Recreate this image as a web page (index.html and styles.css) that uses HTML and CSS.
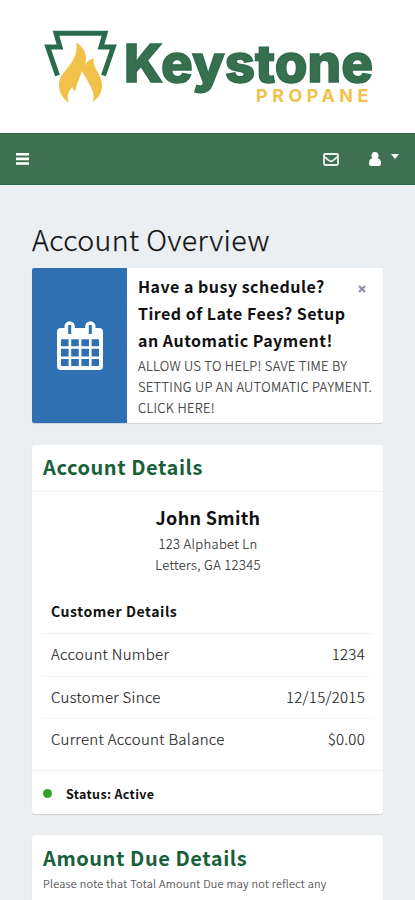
FILE: index.html
```html
<!DOCTYPE html>
<html lang="en">
<head>
<meta charset="utf-8">
<meta name="viewport" content="width=device-width, initial-scale=1">
<title>Account Overview</title>
<link rel="stylesheet" href="styles.css">
</head>
<body>
<header class="brand">
  <svg class="logo" viewBox="0 0 415 133" role="img" aria-label="Keystone Propane">
    <path class="keystone" d="M57.5 75.5 L47.7 47 H60 L56 33.200 H105 L101 47 H113.3 L103.5 75.5"/>
    <path class="flame" d="M76.3 42.5 C87 49 87.500 59 84.500 66 C86.500 61 90 59.500 94 58.300 C91 67 102 73 102 86 C102 93 98.500 98 92.500 102 C96.500 93 89 84 82 71 C80 77 77 82 75.500 91 C73.500 90 72.500 88.500 72.500 86.500 C70 90 65.500 94 69 103 C63 98.500 59 93 59 85 C59 70 79 65 76.300 42.500Z"/>
    <text class="word" x="124" y="82" textLength="249" lengthAdjust="spacingAndGlyphs">Keystone</text>
    <text class="sub" x="256" y="101.500" textLength="117" lengthAdjust="spacingAndGlyphs">PROPANE</text>
  </svg>
</header>
<nav class="bar">
  <svg class="menu" viewBox="0 0 13 12"><path d="M0 0h13v2.600H0zM0 4.600h13v2.600H0zM0 9.200h13v2.600H0z"/></svg>
  <svg class="mail" viewBox="0 0 16 13"><rect x="1" y="1" width="14" height="11" rx="1.200"/><path d="M1.200 3.500 C4 6 6.500 8.300 8 8.300 S12 6 14.800 3.500"/></svg>
  <svg class="user" viewBox="0 0 12 14"><path d="M6 0a3.400 3.600 0 0 1 2.500 6.200C11 6.300 12 8.500 12 11.500 12 13 11.200 14 10 14H2C.8 14 0 13 0 11.500 0 8.500 1 6.300 3.500 6.200A3.400 3.600 0 0 1 6 0z"/></svg>
  <svg class="caret" viewBox="0 0 8 5"><path d="M0 0h8L4 5z"/></svg>
</nav>
<main class="page">
  <h1>Account Overview</h1>
  <section class="promo">
    <div class="promo-icon">
      <svg viewBox="0 0 46 49"><path fill-rule="evenodd" d="M4 7h3.500V5.500a5.200 5.200 0 0 1 10.400 0V7h10.200V5.500a5.200 5.200 0 0 1 10.400 0V7H42a4 4 0 0 1 4 4v34a4 4 0 0 1-4 4H4a4 4 0 0 1-4-4V11a4 4 0 0 1 4-4zM11.200 4v9h3V4zM31.800 4v9h3V4zM4 18.200v7h7.600v-7zM14.200 18.200v7h7.600v-7zM24.400 18.200v7H32v-7zM34.600 18.200v7h7.400v-7zM4 27.800v7.600h7.600v-7.600zM14.200 27.800v7.600h7.600v-7.600zM24.400 27.800v7.600H32v-7.600zM34.600 27.800v7.600h7.400v-7.600zM4 38v7h7.600v-7zM14.200 38v7h7.600v-7zM24.400 38v7H32v-7zM34.600 38v7h7.400v-7z"/></svg>
    </div>
    <div class="promo-body">
      <h2>Have a busy schedule?<br>Tired of Late Fees? Setup<br>an Automatic Payment!</h2>
      <p>ALLOW US TO HELP! SAVE TIME BY<br>SETTING UP AN AUTOMATIC PAYMENT.<br>CLICK HERE!</p>
      <svg class="close" viewBox="0 0 8 8"><path d="M1 1l6 6M7 1L1 7"/></svg>
    </div>
  </section>
  <section class="card account">
    <h3 class="card-title ruled">Account Details</h3>
    <div class="person">
      <h4>John Smith</h4>
      <p>123 Alphabet Ln<br>Letters, GA 12345</p>
    </div>
    <div class="details">
      <h5>Customer Details</h5>
      <div class="row"><span>Account Number</span><span>1234</span></div>
      <div class="row"><span>Customer Since</span><span>12/15/2015</span></div>
      <div class="row"><span>Current Account Balance</span><span>$0.00</span></div>
    </div>
    <div class="status"><i class="dot"></i><span>Status: Active</span></div>
  </section>
  <section class="card due">
    <h3 class="card-title">Amount Due Details</h3>
    <p>Please note that Total Amount Due may not reflect any<br>new offers or common gallon usage.</p>
  </section>
</main>
</body>
</html>
```
FILE: styles.css
```css
* { box-sizing: border-box; margin: 0; padding: 0; }
html, body { height: 900px; overflow: hidden; }
body { background: #ebeff2; color: #111; font-family: "Noto Sans CJK SC", "Noto Sans", sans-serif; display: flex; flex-direction: column; }
svg { display: block; flex: none; }
.brand { height: 133px; flex: none; background: #fff; }
.logo { width: 415px; height: 133px; }
.keystone { fill: none; stroke: #2a6b4d; stroke-width: 5; }
.flame { fill: #f2c14a; stroke: #fff; stroke-width: 1; paint-order: stroke; }
.word { font: 800 52px Inter, sans-serif; fill: #36704f; stroke: #2f6b4f; stroke-width: 1.400; }
.sub { font: 700 17.500px Inter, sans-serif; letter-spacing: 4.500px; fill: #f2c14a; }
.bar { height: 52px; flex: none; background: #407052; border-top: 1px solid #2b664a; border-bottom: 1px solid #2b664a; display: flex; align-items: center; padding: 0 16px; }
.bar path { fill: #fff; }
.menu { width: 13px; height: 12px; margin-right: auto; }
.mail { width: 16px; height: 13px; margin-right: 30px; }
.bar .mail rect, .bar .mail path { fill: none; stroke: #e8f0e8; stroke-width: 1.800; }
.user { width: 12px; height: 14px; margin-right: 10px; }
.caret { width: 8px; height: 5px; margin-bottom: 5px; }
.page { height: 715px; overflow: hidden; padding: 38px 32px 0; }
h1 { height: 45px; line-height: 31px; font-size: 28.500px; letter-spacing: .42px; font-weight: 300; white-space: nowrap; -webkit-text-stroke: .25px #111; }
.promo { width: 351px; height: 155px; display: flex; background: #fff; border-radius: 2px; box-shadow: 0 1px 1px #ccd0d3; margin-bottom: 22px; overflow: hidden; }
.promo-icon { width: 95px; background: #2f70b3; display: flex; justify-content: center; align-items: center; }
.promo-icon svg { width: 46px; height: 49px; fill: #fff; }
.promo-body { flex: 1; padding: 5px 0 0 11px; position: relative; white-space: nowrap; }
h2 { font-size: 16px; font-weight: 700; line-height: 27px; letter-spacing: .48px; }
.promo-body p { font-size: 13px; font-weight: 300; line-height: 21px; letter-spacing: .3px; color: #333; margin-top: 1px; }
.close { position: absolute; right: 17px; top: 17px; width: 8px; height: 8px; stroke: #8d91ad; stroke-width: 2.200; }
.card { width: 351px; background: #fff; border-radius: 3px; box-shadow: 0 1px 1px #ccd0d3; white-space: nowrap; }
.account { height: 369px; margin-bottom: 21px; }
.card-title { height: 47px; padding-left: 11px; font-size: 20px; line-height: 43px; font-weight: 700; letter-spacing: .56px; color: #18603a; }
.ruled { border-bottom: 1px solid #f0f2f3; }
.person { height: 103px; padding: 11px 0 0 1px; text-align: center; }
h4 { font-size: 18px; line-height: 28px; font-weight: 700; letter-spacing: .3px; }
.person p { font-size: 13px; line-height: 21px; font-weight: 300; letter-spacing: .33px; color: #333; margin-top: 2px; }
.details { margin: 0 10px; }
h5 { height: 39px; padding-left: 9px; font-size: 14px; line-height: 33px; font-weight: 700; letter-spacing: .57px; border-bottom: 1px solid #f0f2f3; }
.row { display: flex; justify-content: space-between; height: 42.500px; line-height: 40px; padding: 0 8px 0 9px; font-size: 15px; font-weight: 300; letter-spacing: .3px; color: #222; border-bottom: 1px solid #f3f5f6; }
.row:last-child { height: 52px; border: 0; }
.status { height: 44px; margin-top: -1px; padding-top: 2px; display: flex; align-items: center; padding-left: 11px; border-top: 1px solid #f0f2f3; font-size: 12.500px; font-weight: 700; letter-spacing: .33px; }
.dot { width: 9px; height: 9px; border-radius: 50%; background: #34a32b; margin-right: 14px; }
.due { height: 120px; }
.due .card-title { line-height: 45px; }
.due p { padding-left: 11px; font-size: 11px; line-height: 21px; font-weight: 300; letter-spacing: .29px; color: #444; margin-top: -9px; }
.promo-body p, .person p, .row, .due p { -webkit-text-stroke: .15px currentColor; }
```
